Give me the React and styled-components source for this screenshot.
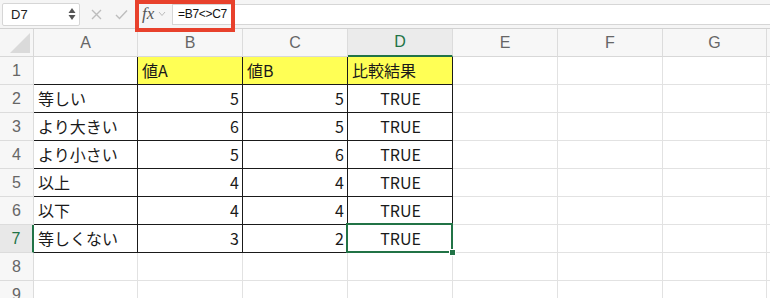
import React from 'react';
import styled, { createGlobalStyle, css } from 'styled-components';

const GlobalStyle = createGlobalStyle`
  html, body {
    margin: 0;
    padding: 0;
    background: #ffffff;
  }
`;

const Window = styled.div`
  position: relative;
  width: 770px;
  height: 298px;
  overflow: hidden;
  background: #ffffff;
  font-family: "Liberation Sans", "Noto Sans CJK JP", sans-serif;
`;

const Toolbar = styled.div`
  display: flex;
  align-items: center;
  height: 28px;
  padding-left: 2px;
  background: #f5f5f5;
  border-bottom: 1px solid #d2d2d2;
  box-sizing: content-box;
`;

const NameBox = styled.div`
  display: flex;
  align-items: center;
  justify-content: space-between;
  width: 78px;
  height: 23px;
  box-sizing: border-box;
  padding: 0 3px 0 8px;
  background: #ffffff;
  border: 1px solid #d6d6d6;
  border-radius: 2px;
  font-size: 13px;
  color: #222;
`;

const IconSlot = styled.div`
  display: flex;
  align-items: center;
  justify-content: center;
  width: 25px;
  height: 22px;
  margin-left: ${(p) => p.$offset || 0}px;
`;

const FxLabel = styled.div`
  display: flex;
  align-items: center;
  gap: 4px;
  margin-left: 8px;
  width: 30px;
  font-family: "Liberation Serif", serif;
  font-style: italic;
  font-size: 17px;
  color: #555;
`;

const FormulaInput = styled.div`
  flex: 1;
  display: flex;
  align-items: center;
  height: 19px;
  padding-left: 5px;
  background: #ffffff;
  border: 1px solid #d6d6d6;
  border-right: none;
  font-size: 12px;
  letter-spacing: -0.3px;
  color: #111;
`;

const Highlight = styled.div`
  position: absolute;
  left: 135px;
  top: 0;
  width: 100px;
  height: 32px;
  box-sizing: border-box;
  border: 4px solid #e8412c;
  z-index: 3;
`;

const Sheet = styled.div`
  display: grid;
  grid-template-columns: 34px 104px repeat(5, 105px) 104px 1fr;
  grid-auto-rows: 28px;
`;

const Corner = styled.div`
  position: relative;
  background: #f6f6f6;
  border-right: 1px solid #d8d8d8;
  border-bottom: 1px solid #d8d8d8;
  box-sizing: border-box;
  &::after {
    content: '';
    position: absolute;
    right: 3px;
    bottom: 3px;
    width: 0;
    height: 0;
    border-left: 20px solid transparent;
    border-bottom: 20px solid #dadada;
  }
`;

const ColHeader = styled.div`
  display: flex;
  align-items: center;
  justify-content: center;
  box-sizing: border-box;
  background: ${(p) => (p.$active ? '#ebebeb' : '#f7f7f7')};
  border-right: 1px solid #dcdcdc;
  border-bottom: ${(p) => (p.$active ? '2px solid #217346' : '1px solid #d8d8d8')};
  font-size: 16px;
  color: ${(p) => (p.$active ? '#217346' : '#666')};
`;

const RowHeader = styled.div`
  display: flex;
  align-items: center;
  justify-content: center;
  box-sizing: border-box;
  background: ${(p) => (p.$active ? '#e8e8e8' : '#f7f7f7')};
  border-right: ${(p) => (p.$active ? '2px solid #217346' : '1px solid #dcdcdc')};
  border-bottom: 1px solid #dcdcdc;
  font-size: 16px;
  color: ${(p) => (p.$active ? '#217346' : '#666')};
`;

const Cell = styled.div`
  position: relative;
  display: flex;
  align-items: center;
  box-sizing: border-box;
  padding: 0 3px 2px 4px;
  border-right: 1px solid ${(p) => (p.$boxed ? '#1a1a1a' : '#e2e2e2')};
  border-bottom: 1px solid ${(p) => (p.$boxed ? '#1a1a1a' : '#e2e2e2')};
  background: ${(p) => (p.$fill ? '#ffff55' : '#ffffff')};
  font-family: "Noto Sans CJK JP", "Liberation Sans", sans-serif;
  font-size: 16px;
  line-height: 20px;
  color: #1a1a1a;
  white-space: nowrap;
  justify-content: ${(p) =>
    p.$align === 'right' ? 'flex-end' : p.$align === 'center' ? 'center' : 'flex-start'};

  ${(p) =>
    p.$selected &&
    css`
      &::after {
        content: '';
        position: absolute;
        left: -2px;
        top: -2px;
        right: -1px;
        bottom: -1px;
        border: 2px solid #217346;
        pointer-events: none;
      }
      &::before {
        content: '';
        position: absolute;
        right: -4px;
        bottom: -4px;
        width: 5px;
        height: 5px;
        background: #217346;
        border: 1px solid #ffffff;
        z-index: 2;
      }
    `}
`;

const columns = ['A', 'B', 'C', 'D', 'E', 'F', 'G', ''];

const data = [
  ['', '値A', '値B', '比較結果'],
  ['等しい', 5, 5, 'TRUE'],
  ['より大きい', 6, 5, 'TRUE'],
  ['より小さい', 5, 6, 'TRUE'],
  ['以上', 4, 4, 'TRUE'],
  ['以下', 4, 4, 'TRUE'],
  ['等しくない', 3, 2, 'TRUE'],
];

function Spinner() {
  return (
    <svg width="8" height="14" viewBox="0 0 8 14">
      <path d="M4 1 L7.5 6 L0.5 6 Z" fill="#555" />
      <path d="M4 13 L7.5 8 L0.5 8 Z" fill="#555" />
    </svg>
  );
}

function Cross() {
  return (
    <svg width="11" height="11" viewBox="0 0 11 11">
      <path d="M1 1 L10 10 M10 1 L1 10" stroke="#bdbdbd" strokeWidth="1.4" />
    </svg>
  );
}

function Check() {
  return (
    <svg width="13" height="11" viewBox="0 0 13 11">
      <path d="M1 6 L4.5 9.5 L12 1.5" stroke="#bdbdbd" strokeWidth="1.4" fill="none" />
    </svg>
  );
}

function Chevron() {
  return (
    <svg width="8" height="6" viewBox="0 0 8 6">
      <path d="M1 1 L4 4.5 L7 1" stroke="#bbb" strokeWidth="1" fill="none" />
    </svg>
  );
}

function alignOf(value) {
  if (typeof value === 'number') return 'right';
  if (value === 'TRUE' || value === 'FALSE') return 'center';
  return 'left';
}

export default function App() {
  const rowCount = 10;
  return (
    <Window>
      <GlobalStyle />
      <Toolbar>
        <NameBox>
          D7
          <Spinner />
        </NameBox>
        <IconSlot $offset={4}>
          <Cross />
        </IconSlot>
        <IconSlot>
          <Check />
        </IconSlot>
        <FxLabel>
          fx
          <Chevron />
        </FxLabel>
        <FormulaInput>=B7&lt;&gt;C7</FormulaInput>
      </Toolbar>
      <Highlight />
      <Sheet>
        <Corner />
        {columns.map((c, i) => (
          <ColHeader key={i} $active={c === 'D'}>
            {c}
          </ColHeader>
        ))}
        {Array.from({ length: rowCount }, (_, r) => {
          const row = data[r] || [];
          return (
            <React.Fragment key={r}>
              <RowHeader $active={r === 6}>{r + 1}</RowHeader>
              {columns.map((c, ci) => {
                const value = row[ci] ?? '';
                const boxed = r < data.length && ci < 4;
                return (
                  <Cell
                    key={ci}
                    $boxed={boxed}
                    $fill={r === 0 && ci > 0 && ci < 4}
                    $align={alignOf(value)}
                    $selected={r === 6 && ci === 3}
                  >
                    {value}
                  </Cell>
                );
              })}
            </React.Fragment>
          );
        })}
      </Sheet>
    </Window>
  );
}
